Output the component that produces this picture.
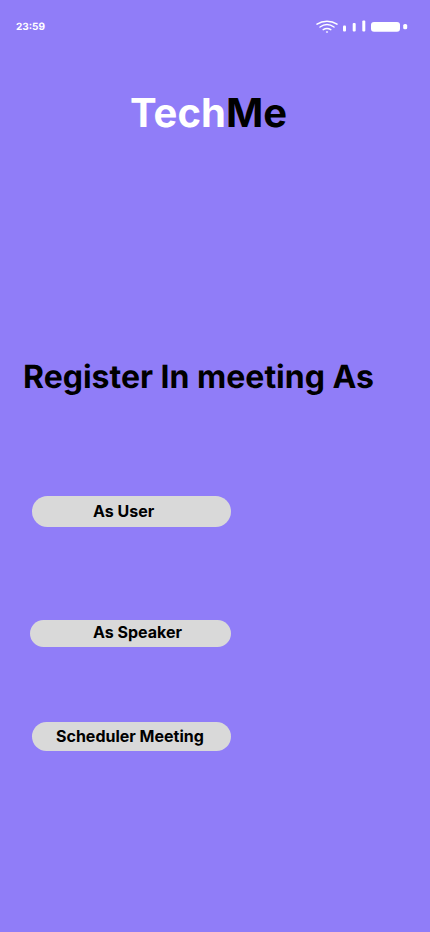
<svelte:head><title>TechMe</title></svelte:head>

<div class="screen">
  <header class="status">
    <time>23:59</time>
    <svg width="92" height="14" viewBox="0 1 92 14" fill="#fff" aria-hidden="true">
      <g fill="none" stroke="#fff" stroke-width="1.5" stroke-linecap="round">
        <path d="M1 5.200C7 1.200 15 1.200 21 5.200" />
        <path d="M4 8C8.500 4.900 13.500 4.900 18 8" />
        <path d="M7.200 10.600C9.800 9 12.200 9 14.800 10.600" />
      </g>
      <ellipse cx="11" cy="13" rx="1.200" ry="0.800" />
      <rect x="27" y="6.500" width="3" height="6" rx="1" />
      <rect x="36.700" y="4" width="3" height="8.500" rx="1" />
      <rect x="46.300" y="1.500" width="3" height="11" rx="1" />
      <rect x="55" y="3" width="29" height="9.700" rx="3" />
      <rect x="87.200" y="5" width="4" height="5.300" rx="1.600" />
    </svg>
  </header>
  <main>
    <p class="logo"><span>Tech</span>Me</p>
    <h1>Register In meeting As</h1>
    <div class="actions">
      <button class="user" type="button">As User</button>
      <button class="speaker" type="button">As Speaker</button>
      <button class="scheduler" type="button">Scheduler Meeting</button>
    </div>
  </main>
</div>

<style>
  :global(body) { background: #907df8; }
  .screen { min-height: 100vh; color: #000; font-family: Inter, sans-serif; font-optical-sizing: none; text-rendering: geometricPrecision; }
  .status { display: flex; align-items: center; justify-content: space-between; padding: 20px 22px 0 16px; }
  time { color: #fff; font-size: 10px; line-height: 14px; font-weight: 700; }
  .logo { margin: 53px 0 0; padding-right: 13px; text-align: center; font-size: 40px; line-height: 52px; font-weight: 700; }
  .logo span { color: #fff; }
  h1 { margin: 218px 0 0 23px; font-size: 32px; line-height: 40px; font-weight: 700; }
  .actions { display: flex; flex-direction: column; align-items: flex-start; padding: 99px 0 0 30px; }
  button { box-sizing: border-box; border: 0; border-radius: 16px; background: #d9d9d9; color: #000; font: 700 16px/20px Inter, sans-serif; text-align: left; cursor: pointer; }
  .user { width: 199px; height: 31px; margin-left: 2px; padding: 0 0 2px 61px; }
  .speaker { width: 201px; height: 27px; margin-top: 93px; padding: 0 0 4px 63px; }
  .scheduler { width: 199px; height: 29px; margin: 75px 0 0 2px; padding: 0 0 2px 24px; }
</style>
